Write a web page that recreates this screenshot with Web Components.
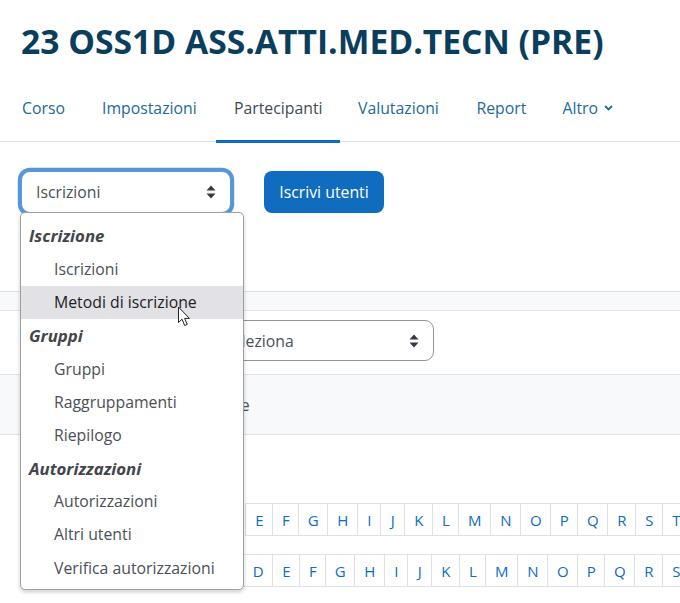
<!DOCTYPE html>
<html lang="it">
<head>
<meta charset="utf-8">
<title>Partecipanti</title>
<style>
  html, body { margin: 0; padding: 0; background: #fff; }
  body { width: 680px; height: 603px; overflow: hidden; position: relative; font: 15.8px "Open Sans", sans-serif; color: #495057; }
</style>
</head>
<body>
<course-page>
  <course-title slot="title">23 OSS1D ASS.ATTI.MED.TECN (PRE)</course-title>
  <tab-nav slot="nav">
    <tab-item style="width:44px">Corso</tab-item>
    <tab-item style="width:96px">Impostazioni</tab-item>
    <tab-item active style="width:88px">Partecipanti</tab-item>
    <tab-item style="width:82.5px">Valutazioni</tab-item>
    <tab-item style="width:50px">Report</tab-item>
    <tab-item caret style="width:52px">Altro</tab-item>
  </tab-nav>
  <select-box slot="actions" focused style="width:210px">Iscrizioni</select-box>
  <action-button slot="actions">Iscrivi utenti</action-button>
  <grey-band slot="body" style="height:18px;margin-top:78px"></grey-band>
  <select-box slot="body" style="width:225px;height:41px;margin:9px 0 13px 209px">Seleziona</select-box>
  <grey-band slot="body" style="height:59px;padding-left:211px">Tutte</grey-band>
  <initials-bar slot="body" style="margin:68px 0 0 245.3px" letters="EFGHIJKLMNOPQRST"></initials-bar>
  <initials-bar slot="body" style="margin:18px 0 0 243.3px" letters="DEFGHIJKLMNOPQRS"></initials-bar>
</course-page>

<drop-menu>
  <menu-group>Iscrizione</menu-group>
  <menu-option>Iscrizioni</menu-option>
  <menu-option hover>Metodi di iscrizione</menu-option>
  <menu-group>Gruppi</menu-group>
  <menu-option>Gruppi</menu-option>
  <menu-option>Raggruppamenti</menu-option>
  <menu-option>Riepilogo</menu-option>
  <menu-group>Autorizzazioni</menu-group>
  <menu-option>Autorizzazioni</menu-option>
  <menu-option>Altri utenti</menu-option>
  <menu-option>Verifica autorizzazioni</menu-option>
</drop-menu>
<mouse-cursor></mouse-cursor>

<script>
// small helper, every element is just a style + markup in an open shadow root
function simple(name, html) {
    customElements.define(name, class extends HTMLElement {
        constructor() {
            super();
            this.attachShadow({mode: "open"}).innerHTML = html;
        }
    });
}

simple("course-page", `
<style>
    :host { display: block; width: 680px; overflow: hidden; }
    .actions { display: flex; gap: 33px; padding: 29px 0 0 21px; align-items: flex-start; }
</style>
<slot name="title"></slot>
<slot name="nav"></slot>
<div class="actions"><slot name="actions"></slot></div>
<slot name="body"></slot>`);

simple("course-title", `
<style>
    :host { display: block; height: 90px; box-sizing: border-box; padding: 20px 0 0 21px; color: #0a3e5c;
        font: 700 33.65px/42px "Open Sans", sans-serif; white-space: nowrap; }
</style>
<slot></slot>`);

simple("tab-nav", `
<style>
    :host { display: flex; height: 52px; box-sizing: border-box; padding-left: 4px; border-bottom: 1px solid #dee2e6; }
</style>
<slot></slot>`);

customElements.define("tab-item", class extends HTMLElement {
    constructor() {
        super();
        const caret = this.hasAttribute("caret") ? `<svg width="9" height="6" viewBox="0 0 9 6"><path d="M1 1l3.5 3.5L8 1" fill="none" stroke="#1d6a96" stroke-width="1.8"/></svg>` : "";
        this.attachShadow({mode: "open"}).innerHTML = `
        <style>
            :host { display: flex; flex: none; box-sizing: content-box; height: 35px; padding: 0 18px 18px; margin-bottom: -1px;
                align-items: center; gap: 6px; color: #1d6a96; white-space: nowrap; position: relative; }
            :host([active]) { color: #404a55; }
            :host([active])::after { content: ""; position: absolute; left: 0; right: 0; bottom: 0; height: 3px; background: #0f6cbf; }
        </style>
        <slot></slot>${caret}`;
    }
});

customElements.define("select-box", class extends HTMLElement {
    constructor() {
        super();
        this.attachShadow({mode: "open"}).innerHTML = `
        <style>
            :host { display: flex; align-items: center; justify-content: space-between; box-sizing: border-box; height: 42px;
                padding: 0 14px; background: #fff; border: 1px solid #8f959e; border-radius: 9px; color: #495057; }
            :host([focused]) { border-color: #5b9ad6; box-shadow: 0 0 0 3.2px #5597d6; }
            svg { flex: none; }
        </style>
        <slot></slot>
        <svg width="10" height="14" viewBox="0 0 10 14"><path d="M5 0.5L9.5 5.5H0.5zM5 13.5L0.5 8.5H9.5z" fill="#343a40"/></svg>`;
    }
});

simple("action-button", `
<style>
    :host { display: flex; align-items: center; justify-content: center; box-sizing: border-box; width: 120px; height: 42px;
        background: #0f6cbf; color: #fff; border-radius: 8px; }
</style>
<slot></slot>`);

simple("grey-band", `
<style>
    :host { display: flex; align-items: center; background: #f8f9fa; border-top: 1px solid #dee2e6; border-bottom: 1px solid #dee2e6; }
</style>
<slot></slot>`);

// cell widths read off the reference, pagination cells in moodle are just padded links
const LETTER_W = {D: 29, E: 27, F: 26, G: 29, H: 30, I: 23, J: 24, K: 28, L: 26, M: 32, N: 30, O: 30, P: 27, Q: 30, R: 28, S: 27, T: 27};

class InitialsBar extends HTMLElement {
    constructor() {
        super();
        this.shadowDOM = this.attachShadow({mode: "open"});
    }
    connectedCallback() {
        const cells = [...this.getAttribute("letters")].map(l => `<a style="width:${LETTER_W[l]}px">${l}</a>`).join("");
        this.shadowDOM.innerHTML = `
        <style>
            :host { display: flex; height: 33px; box-sizing: border-box; color: #0f6cbf; }
            a { display: flex; flex: none; align-items: center; justify-content: center; box-sizing: border-box;
                border: 1px solid #dee2e6; border-right: 0; font-size: 15px; }
        </style>
        ${cells}`;
    }
}
customElements.define("initials-bar", InitialsBar);

simple("drop-menu", `
<style>
    :host { display: block; position: absolute; left: 20px; top: 212px; width: 224px; height: 378px; box-sizing: border-box;
        padding: 6.2px 0 0; background: #fff; border: 1px solid #a0a0a0; border-radius: 5px; box-shadow: 0 2px 4px rgba(0,0,0,.2); }
</style>
<slot></slot>`);

simple("menu-group", `
<style>
    :host { display: flex; align-items: center; height: 33.2px; padding-left: 8px; font-size: 16.8px; font-weight: 700; font-style: italic; color: #42464b; }
</style>
<slot></slot>`);

simple("menu-option", `
<style>
    :host { display: flex; align-items: center; height: 33.2px; padding-left: 33px; color: #495057; white-space: nowrap; }
    :host([hover]) { background: #e1e1e6; color: #1d2125; }
</style>
<slot></slot>`);

simple("mouse-cursor", `
<style>
    :host { display: block; position: absolute; left: 177px; top: 306px; width: 14px; height: 21px; }
</style>
<svg width="14" height="21" viewBox="0 0 14 21"><path d="M1.5 1V16.5L5 13.2L7.7 19.5L10.3 18.4L7.6 12.4H12.4z" fill="#fff" stroke="#222" stroke-width="1" stroke-linejoin="miter"/></svg>`);
</script>
</body>
</html>
